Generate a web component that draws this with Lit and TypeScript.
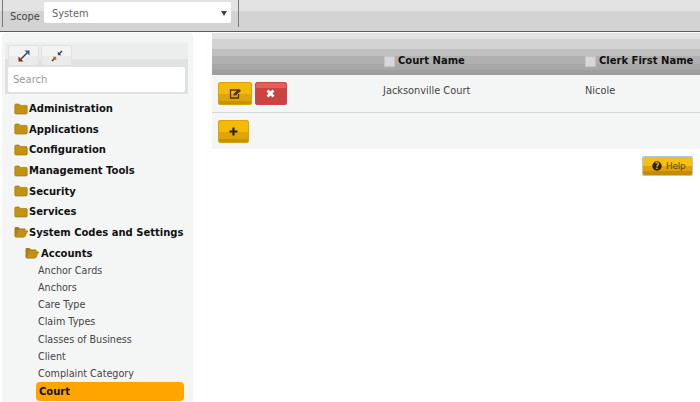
import { LitElement, html, css, svg } from "lit";
import { customElement } from "lit/decorators.js";

const closed = svg`<svg class="fi" width="14" height="12" viewBox="0 0 14 12"><path d="M0.8 2.2Q0.8 1 2 1H5L6.300 2.400H12Q13.200 2.400 13.200 3.600V10Q13.200 11 12 11H2Q.8 11 .8 10Z" fill="#c4920f" stroke="#8f6b0c" stroke-width=".6"/></svg>`;
const open = svg`<svg class="fi" width="14" height="12" viewBox="0 0 14 12"><path d="M.5 2.200Q.5 1 1.700 1H4.600L5.800 2.400H10.600Q11.600 2.400 11.600 3.400V4.600H4L1.500 11.200H1.500Q.5 11 .5 10Z" fill="#a97d0c"/><path d="M4 4.800H13.800L11 10.400Q10.600 11.200 9.600 11.200H1.600Z" fill="#c4920f" stroke="#8f6b0c" stroke-width=".5"/></svg>`;

@customElement("app-root")
export class AppRoot extends LitElement {
  static styles = css`
    :host { display: block; width: 700px; height: 402px; overflow: hidden; background: #fff;
      font-family: "DejaVu Sans", sans-serif; font-size: 10px; color: #333; }
    .top { height: 31px; border-bottom: 1px solid #5c5c5c; display: flex;
      background: linear-gradient(#e3e3e3 0 11px, #d3d3d3 11px); }
    .scope { width: 235px; height: 27px; margin-left: 2px; border-left: 1px solid #777; border-right: 1px solid #777;
      display: flex; align-items: flex-start; }
    .scope label { margin: 11px 0 0 7px; width: 34px; font-size: 9.8px; color: #444; }
    .select { margin-top: 2px; width: 187px; height: 21px; background: #fff; border-radius: 2px; display: flex;
      align-items: center; justify-content: space-between; box-sizing: border-box; padding: 1px 4px 0 8px; color: #666; font-size: 9.8px; }
    .main { display: flex; height: 370px; }
    .side { width: 191px; margin: 1px 0 0 2px; height: 369px; background: #f4f6f6; border-radius: 4px 4px 0 0;
      box-sizing: border-box; padding: 9px 5px 0 3px; flex: none; }
    .tools { background: linear-gradient(#f0f1f1 0 2px, #eceded 2px 17px, #e0e1e1 17px); height: 52px; box-sizing: border-box; padding: 3px 3px 0 3px; }
    .expbtns { display: flex; gap: 2px; }
    .exp { width: 31px; height: 21px; background: linear-gradient(#f3f3f3 0 11px, #ebebeb 11px); border-radius: 2px 2px 0 0;
      box-shadow: inset 0 0 0 1px #e2e2e2; display: flex; align-items: center; justify-content: center; }
    .search { height: 25px; margin-top: 1px; background: #fff; border-radius: 2px; box-sizing: border-box; padding: 0 5px;
      display: flex; align-items: center; color: #999; font-size: 10px; }
    .tree { display: flex; flex-direction: column; padding: 0 0 0 9px; margin-top: 4.5px; }
    .node { height: 20.6px; display: flex; align-items: center; gap: 1px; font-weight: 700; font-size: 10px; color: #111; white-space: nowrap; }
    .fi { flex: none; }
    .sub { padding: 1px 0 0 11px; height: 20px; gap: 2px; box-sizing: border-box; }
    .leafs { display: flex; flex-direction: column; padding-left: 24px; margin-top: -1px; }
    .leaf { height: 17.2px; display: flex; align-items: center; color: #444; font-size: 9.6px; white-space: nowrap; }
    .leaf.sel { width: 148px; height: 19px; margin-left: -2px; padding-left: 3px; box-sizing: border-box; background: #ffa500;
      border-radius: 4px; font-weight: 700; font-size: 10px; color: #111; }
    .right { margin-left: 19px; flex: 1; display: flex; flex-direction: column; padding-top: 1px; min-width: 0; }
    .head { height: 42px; box-sizing: border-box; display: grid; grid-template-columns: 172px 201px 1fr; align-items: center;
      padding-top: 12px; font-weight: 700; font-size: 10px; color: #111;
      background: linear-gradient(#e3e3e3 0 6px, #d3d3d3 6px 16px, #c0c0c0 16px 23px, #b0b0b0 23px 31px, #a8a8a8 31px 37px, #9e9e9e 37px); }
    .hc { display: flex; align-items: center; gap: 3px; white-space: nowrap; }
    .cb { width: 9px; height: 9px; background: #d8d8d8; border: 1px solid #c4c4c4; margin-top: 3px; flex: none; }
    .row { height: 37px; background: #f4f6f6; border-bottom: 1px solid #d8d8d8; display: grid;
      grid-template-columns: 171px 202px 1fr; }
    .acts { display: flex; gap: 3px; padding: 7px 0 0 6px; }
    .cell { padding-top: 10px; color: #444; font-size: 9.8px; }
    .btn { height: 23px; border-radius: 3px; display: flex; align-items: center; justify-content: center; box-sizing: border-box; }
    .y { width: 34px; background: linear-gradient(#f5b90a 0 12px, #e0a500 12px 19px, #c79106 19px); box-shadow: inset 0 0 0 1px #d9a40a; }
    .r { width: 31.500px; background: linear-gradient(#e45c5c 0 6px, #cc4340 6px); box-shadow: inset 0 0 0 1px #c84a48; }
    .add { height: 36px; background: #f4f6f6; padding: 7px 0 0 6px; box-sizing: border-box; }
    .add .y { width: 31px; }
    .helpwrap { display: flex; justify-content: flex-end; padding: 8px 8px 0 0; }
    .help { width: 49px; height: 18px; gap: 4px; color: #5a4300; font-size: 9px; letter-spacing: -.3px;
      justify-content: flex-start; padding-left: 9px;
      background: linear-gradient(#f8bf0f 0 9px, #dda200 9px 14px, #c28c05 14px); box-shadow: 0 0 0 1px #a9c8e4; border-radius: 1px; }
  `;
  render() {
    const nodes = ["Administration", "Applications", "Configuration", "Management Tools", "Security", "Services"];
    const leafs = ["Anchor Cards", "Anchors", "Care Type", "Claim Types", "Classes of Business", "Client", "Complaint Category"];
    return html`
      <div class="top"><div class="scope"><label>Scope</label>
        <div class="select"><span>System</span><svg width="6" height="5" viewBox="0 0 6 5"><path d="M0 0H6L3 5Z" fill="#444"/></svg></div></div></div>
      <div class="main">
        <div class="side">
          <div class="tools">
            <div class="expbtns">
              <div class="exp"><svg width="12" height="12" viewBox="0 0 12 12"><path d="M3 9 9 3" stroke="#333" stroke-width="1.300"/><path d="M11.500 .5V5.500L6.500 .5Z" fill="#2a5a8c"/><path d="M.5 11.500V6.500L5.500 11.500Z" fill="#7a2c14"/></svg></div>
              <div class="exp"><svg width="12" height="12" viewBox="0 0 12 12"><path d="M1 11 4 8M11 1 8 4" stroke="#333" stroke-width="1.300"/><path d="M6.800 5.200V1.500L10.500 5.200Z" fill="#2f4f70"/><path d="M5.200 6.800V10.500L1.500 6.800Z" fill="#b5701c"/></svg></div>
            </div>
            <div class="search">Search</div>
          </div>
          <div class="tree">
            ${nodes.map((n) => html`<div class="node">${closed}<span>${n}</span></div>`)}
            <div class="node">${open}<span>System Codes and Settings</span></div>
            <div class="node sub">${open}<span>Accounts</span></div>
            <div class="leafs">
              ${leafs.map((n) => html`<div class="leaf">${n}</div>`)}
              <div class="leaf sel">Court</div>
            </div>
          </div>
        </div>
        <div class="right">
          <div class="head"><span></span>
            <div class="hc"><span class="cb"></span>Court Name</div>
            <div class="hc"><span class="cb"></span>Clerk First Name</div>
          </div>
          <div class="row">
            <div class="acts">
              <div class="btn y"><svg width="13" height="11" viewBox="0 0 13 11"><path d="M9 2H1.500V10H9.500V6" fill="none" stroke="#4a3500" stroke-width="1.300"/><path d="M4.500 7.800 5 5.500 10 .8 12 2.700 7 7.300Z" fill="#4a3500"/></svg></div>
              <div class="btn r"><svg width="9" height="9" viewBox="0 0 9 9"><path d="M1.500 1.500 7.500 7.500M7.500 1.500 1.500 7.500" stroke="#fff" stroke-width="2.800"/></svg></div>
            </div>
            <div class="cell">Jacksonville Court</div>
            <div class="cell">Nicole</div>
          </div>
          <div class="add"><div class="btn y"><svg width="9" height="9" viewBox="0 0 9 9"><path d="M4.500 .5V8.500M.5 4.500H8.500" stroke="#2b1d00" stroke-width="2.200"/></svg></div></div>
          <div class="helpwrap"><div class="btn help"><svg width="10" height="10" viewBox="0 0 10 10"><circle cx="5" cy="5" r="4.700" fill="#2e2000"/><text x="5" y="8" text-anchor="middle" font-size="8" font-weight="700" fill="#e0a800" font-family="DejaVu Sans">?</text></svg><span>Help</span></div></div>
        </div>
      </div>`;
  }
}
